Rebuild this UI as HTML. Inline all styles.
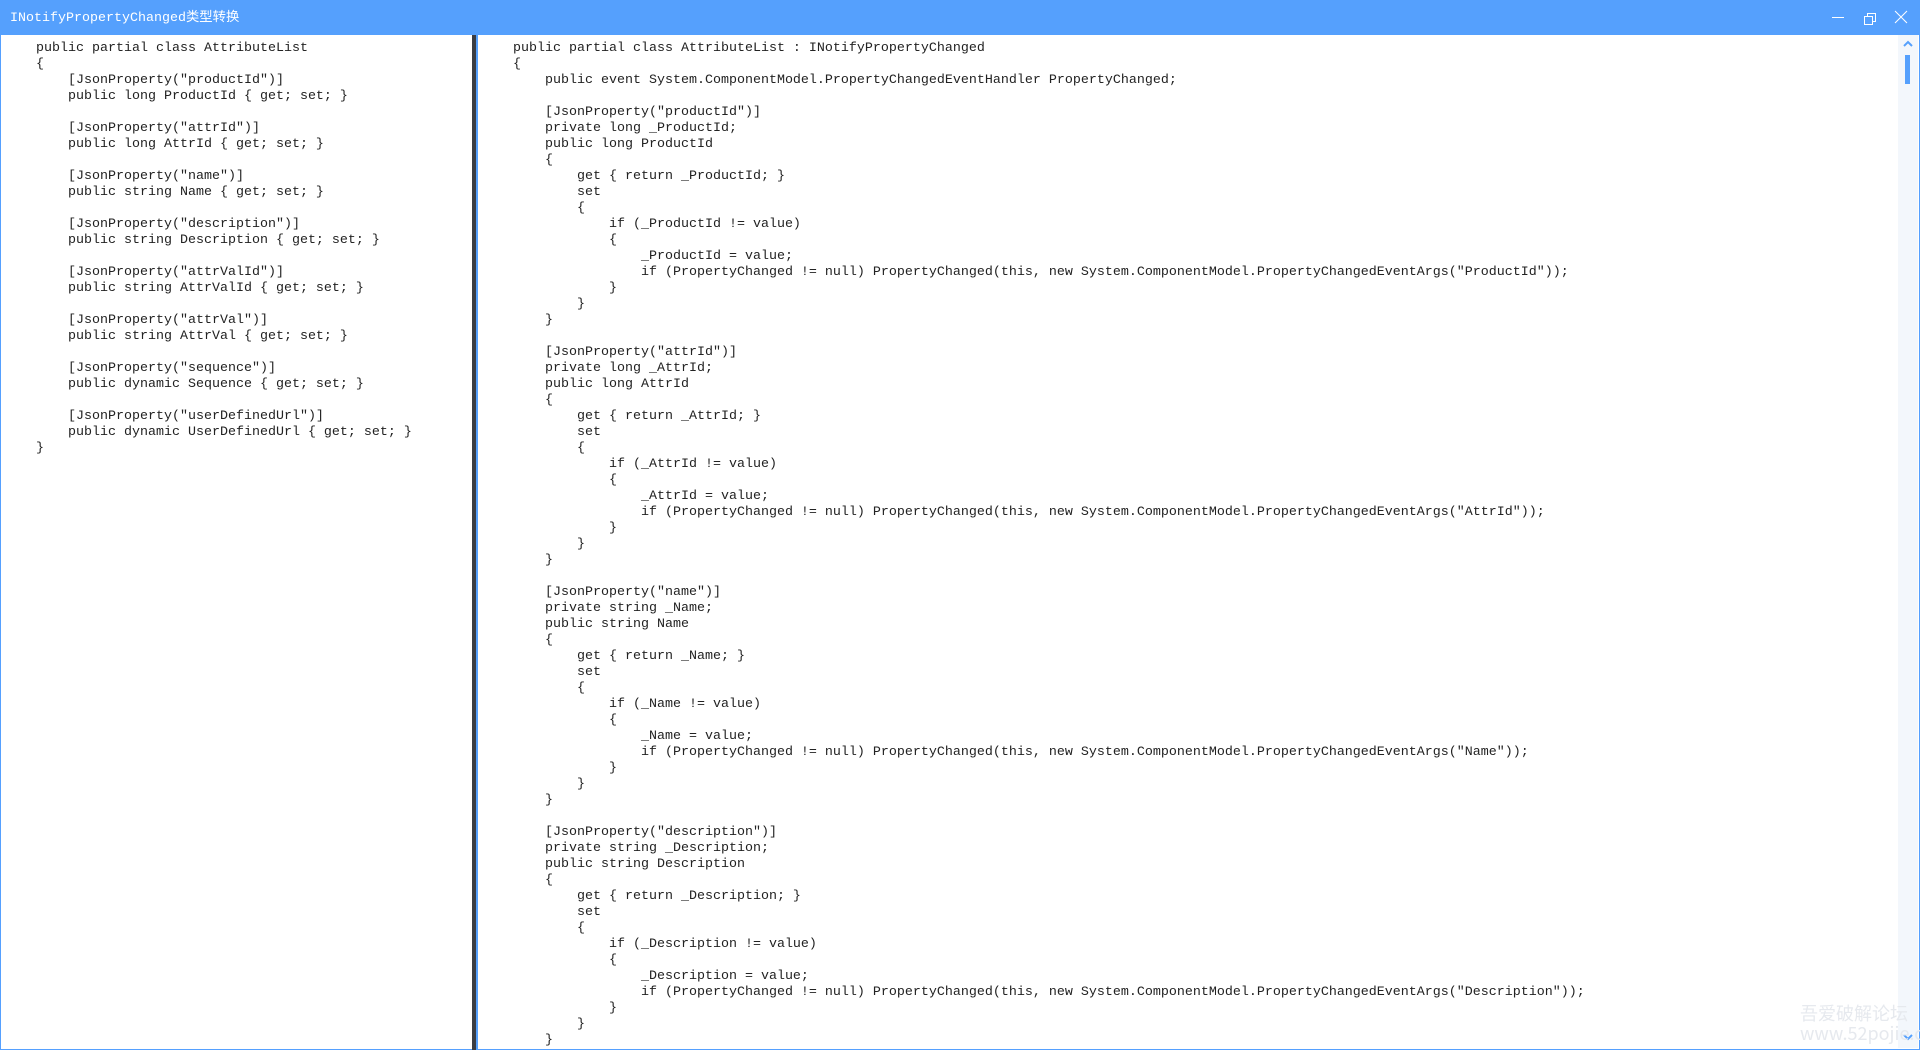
<!DOCTYPE html>
<html><head><meta charset="utf-8"><style>
html,body{margin:0;padding:0;width:1920px;height:1050px;overflow:hidden;background:#fff;}
body{position:relative;font-family:"Liberation Mono","Noto Sans CJK SC",monospace;}
#frame{position:absolute;left:0;top:0;width:1918px;height:1048px;border:1px solid #55a0ff;}
#title{position:absolute;left:0;top:0;width:1920px;height:35px;background:#55a0fd;color:#fff;font-size:13.33px;line-height:35px;}
#title span{position:absolute;left:10px;top:1px;}
pre{margin:0;font-family:"Liberation Mono","Noto Sans CJK SC",monospace;font-size:13.33px;line-height:16px;color:#222;position:absolute;white-space:pre;}
#left{left:36px;top:41px;}
#right{left:513px;top:41px;}
#split{position:absolute;left:472px;top:35px;width:4px;height:1015px;background:#3a3d44;}
#split2{position:absolute;left:476px;top:35px;width:2px;height:1015px;background:#55a0fd;}
#sb{position:absolute;left:1898px;top:35px;width:20px;height:1013px;background:#f3f7fc;}
#thumb{position:absolute;left:1905px;top:55px;width:5px;height:29px;background:#55a0fd;}
.ctl{position:absolute;top:0;height:35px;}
#wm{position:absolute;left:1800px;top:1003px;color:#e6e9ee;font-size:18px;line-height:20px;font-family:"Noto Sans CJK SC",sans-serif;}
</style></head><body>
<div id="frame"></div>
<div id="title"><span>INotifyPropertyChanged类型转换</span>
<svg class="ctl" style="left:1830px" width="18" height="35"><line x1="2" y1="17.5" x2="14" y2="17.5" stroke="#fff" stroke-width="1"/></svg>
<svg class="ctl" style="left:1862px" width="18" height="35"><rect x="2.5" y="16.5" width="8" height="8" fill="none" stroke="#fff"/><path d="M5.5 16.5V13.5H13.5V21.5H10.5" fill="none" stroke="#fff"/></svg>
<svg class="ctl" style="left:1893px" width="18" height="35"><path d="M2 11L14 23M14 11L2 23" stroke="#fff" stroke-width="1"/></svg>
</div>
<pre id="left">public partial class AttributeList
{
    [JsonProperty("productId")]
    public long ProductId { get; set; }

    [JsonProperty("attrId")]
    public long AttrId { get; set; }

    [JsonProperty("name")]
    public string Name { get; set; }

    [JsonProperty("description")]
    public string Description { get; set; }

    [JsonProperty("attrValId")]
    public string AttrValId { get; set; }

    [JsonProperty("attrVal")]
    public string AttrVal { get; set; }

    [JsonProperty("sequence")]
    public dynamic Sequence { get; set; }

    [JsonProperty("userDefinedUrl")]
    public dynamic UserDefinedUrl { get; set; }
}</pre>
<div id="split"></div><div id="split2"></div>
<pre id="right">public partial class AttributeList : INotifyPropertyChanged
{
    public event System.ComponentModel.PropertyChangedEventHandler PropertyChanged;

    [JsonProperty("productId")]
    private long _ProductId;
    public long ProductId
    {
        get { return _ProductId; }
        set
        {
            if (_ProductId != value)
            {
                _ProductId = value;
                if (PropertyChanged != null) PropertyChanged(this, new System.ComponentModel.PropertyChangedEventArgs("ProductId"));
            }
        }
    }

    [JsonProperty("attrId")]
    private long _AttrId;
    public long AttrId
    {
        get { return _AttrId; }
        set
        {
            if (_AttrId != value)
            {
                _AttrId = value;
                if (PropertyChanged != null) PropertyChanged(this, new System.ComponentModel.PropertyChangedEventArgs("AttrId"));
            }
        }
    }

    [JsonProperty("name")]
    private string _Name;
    public string Name
    {
        get { return _Name; }
        set
        {
            if (_Name != value)
            {
                _Name = value;
                if (PropertyChanged != null) PropertyChanged(this, new System.ComponentModel.PropertyChangedEventArgs("Name"));
            }
        }
    }

    [JsonProperty("description")]
    private string _Description;
    public string Description
    {
        get { return _Description; }
        set
        {
            if (_Description != value)
            {
                _Description = value;
                if (PropertyChanged != null) PropertyChanged(this, new System.ComponentModel.PropertyChangedEventArgs("Description"));
            }
        }
    }</pre>
<div id="sb"></div><div id="thumb"></div>
<svg style="position:absolute;left:1902px;top:40px" width="12" height="8"><path d="M2 6L6 2L10 6" fill="none" stroke="#55a0fd" stroke-width="2"/></svg>
<svg style="position:absolute;left:1902px;top:1033px" width="12" height="8"><path d="M2 2L6 6L10 2" fill="none" stroke="#55a0fd" stroke-width="2"/></svg>
<div id="wm">吾爱破解论坛<br>www.52pojie.cn</div>
</body></html>
